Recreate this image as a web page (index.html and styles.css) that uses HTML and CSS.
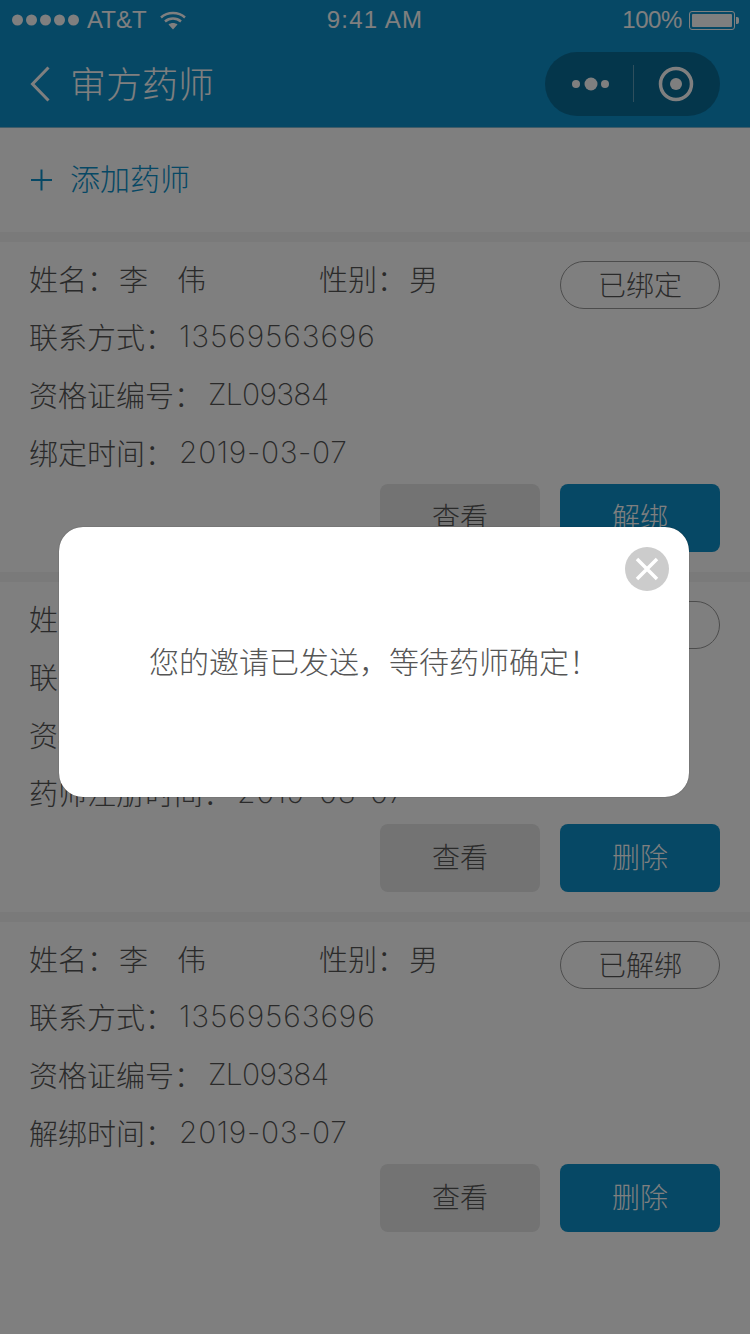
FILE: index.html
```html
<!DOCTYPE html>
<html lang="zh-CN">
  <head>
    <meta charset="UTF-8">
    <meta name="viewport" content="width=device-width, initial-scale=1.0">
    <title>审方药师</title>
    <link rel="stylesheet" href="styles.css">
  </head>
  <body>
    <div class="page">
      <div class="topbar">
        <div class="statusbar">
          <div class="statusleft">
            <svg class="signal" width="68" height="12" viewBox="0 0 68 12">
              <circle cx="5.5" cy="6" r="5.5"/><circle cx="19.5" cy="6" r="5.5"/><circle cx="33.5" cy="6" r="5.5"/><circle cx="47.5" cy="6" r="5.5"/><circle cx="61.5" cy="6" r="5.5"/>
            </svg>
            <span class="carrier">AT&amp;T</span>
            <svg class="wifi" width="26" height="20" viewBox="0 0 26 20">
              <path d="M1 7.5C7.500 1.500 18.500 1.500 25 7.500" fill="none" stroke="#fff" stroke-width="2.400"/>
              <path d="M5 11.500C9.500 7.500 16.500 7.500 21 11.500" fill="none" stroke="#fff" stroke-width="2.400"/>
              <path d="M8.500 14.500C11 12.500 15 12.500 17.500 14.500L13 19.500Z" fill="#fff"/>
            </svg>
          </div>
          <div class="statustime">9:41 AM</div>
          <div class="statusright">
            <span class="percent">100%</span>
            <div class="battery"><div class="batteryfill"></div></div>
            <div class="batterytip"></div>
          </div>
        </div>
        <div class="navbar">
          <svg class="back" width="20" height="36" viewBox="0 0 20 36">
            <path d="M18.500 1.500L2.500 18L18.500 34.500" fill="none" stroke="#fff" stroke-width="3"/>
          </svg>
          <div class="navtitle">审方药师</div>
          <div class="capsule">
            <div class="capsulemore">
              <svg width="38" height="14" viewBox="0 0 38 14">
                <circle cx="4" cy="7" r="4" fill="#fff"/><circle cx="19" cy="7" r="6.500" fill="#fff"/><circle cx="33" cy="7" r="4" fill="#fff"/>
              </svg>
            </div>
            <div class="capsuleline"></div>
            <div class="capsuleclose">
              <svg width="36" height="36" viewBox="0 0 36 36">
                <circle cx="18" cy="18" r="15.500" fill="none" stroke="#fff" stroke-width="3.500"/>
                <circle cx="18" cy="18" r="6" fill="#fff"/>
              </svg>
            </div>
          </div>
        </div>
      </div>

      <div class="addrow">
        <svg class="plus" width="22" height="22" viewBox="0 0 22 22">
          <path d="M0 11H21M10.500 0.500V21.500" fill="none" stroke="#0c90ca" stroke-width="2"/>
        </svg>
        <span class="addtext">添加药师</span>
      </div>

      <div class="card">
        <div class="row">
          <div class="namecell"><span class="label">姓名：</span><span class="value">李　伟</span></div>
          <div class="sexcell"><span class="label">性别：</span><span class="value">男</span></div>
          <div class="badge">已绑定</div>
        </div>
        <div class="row"><span class="label">联系方式：</span><span class="num phone">13569563696</span></div>
        <div class="row"><span class="label">资格证编号：</span><span class="num code">ZL09384</span></div>
        <div class="row"><span class="label">绑定时间：</span><span class="num date">2019-03-07</span></div>
        <div class="actions">
          <div class="btn grey">查看</div>
          <div class="btn blue">解绑</div>
        </div>
      </div>

      <div class="card">
        <div class="row">
          <div class="namecell"><span class="label">姓名：</span><span class="value">李　伟</span></div>
          <div class="sexcell"><span class="label">性别：</span><span class="value">男</span></div>
          <div class="badge">待确认</div>
        </div>
        <div class="row"><span class="label">联系方式：</span><span class="num phone">13569563696</span></div>
        <div class="row"><span class="label">资格证编号：</span><span class="num code">ZL09384</span></div>
        <div class="row"><span class="label">药师注册时间：</span><span class="num date">2019-03-07</span></div>
        <div class="actions">
          <div class="btn grey">查看</div>
          <div class="btn blue">删除</div>
        </div>
      </div>

      <div class="card">
        <div class="row">
          <div class="namecell"><span class="label">姓名：</span><span class="value">李　伟</span></div>
          <div class="sexcell"><span class="label">性别：</span><span class="value">男</span></div>
          <div class="badge">已解绑</div>
        </div>
        <div class="row"><span class="label">联系方式：</span><span class="num phone">13569563696</span></div>
        <div class="row"><span class="label">资格证编号：</span><span class="num code">ZL09384</span></div>
        <div class="row"><span class="label">解绑时间：</span><span class="num date">2019-03-07</span></div>
        <div class="actions">
          <div class="btn grey">查看</div>
          <div class="btn blue">删除</div>
        </div>
      </div>
    </div>

    <div class="mask">
      <div class="dialog">
        <div class="dialogclose">
          <svg width="24" height="24" viewBox="0 0 24 24">
            <path d="M2 2L22 22M22 2L2 22" fill="none" stroke="#fff" stroke-width="3.500"/>
          </svg>
        </div>
        <div class="dialogtext">您的邀请已发送，等待药师确定！</div>
      </div>
    </div>
  </body>
</html>
```

FILE: styles.css
```css
* {
  box-sizing: border-box;
}
html, body {
  margin: 0;
  height: 1334px;
  overflow: hidden;
}
body {
  position: relative;
  background-color: white;
  font-family: "Inter", "Noto Sans CJK SC", sans-serif;
  font-weight: 300;
  color: #555;
}
.page {
  display: flex;
  flex-direction: column;
}
.topbar {
  height: 128px;
  background-color: #0c90ca;
  color: white;
  border-bottom: 1px solid #7fb9d3;
}
.statusbar {
  display: flex;
  align-items: center;
  justify-content: space-between;
  height: 40px;
  padding: 0 12px;
  font-family: "Liberation Sans", sans-serif;
  font-size: 24px;
}
.statusleft, .statusright {
  display: flex;
  align-items: center;
  width: 240px;
}
.statusright {
  justify-content: flex-end;
}
.signal {
  fill: white;
}
.carrier {
  margin-left: 7px;
}
.wifi {
  margin-left: 13px;
}
.statustime {
  letter-spacing: 1.2px;
}
.percent {
  margin-right: 7px;
  letter-spacing: -0.4px;
}
.battery {
  width: 46px;
  height: 19px;
  padding: 2px;
  border: 1px solid white;
  border-radius: 3px;
}
.batteryfill {
  height: 100%;
  background-color: white;
  border-radius: 1px;
}
.batterytip {
  width: 3px;
  height: 7px;
  margin-left: 1px;
  margin-right: -1px;
  background-color: white;
  border-radius: 0 2px 2px 0;
}
.navbar {
  display: flex;
  align-items: center;
  height: 87px;
  padding: 0 30px;
}
.back {
  flex: none;
}
.navtitle {
  margin-left: 20px;
  padding-bottom: 3px;
  font-family: "Noto Sans CJK SC", sans-serif;
  font-size: 36px;
  font-weight: 300;
}
.capsule {
  display: flex;
  align-items: center;
  width: 175px;
  height: 64px;
  margin-left: auto;
  border-radius: 32px;
  background-color: rgba(0, 0, 0, 0.25);
}
.capsulemore {
  display: flex;
  justify-content: center;
  width: 88px;
  padding-left: 4px;
}
.capsuleline {
  width: 1px;
  height: 37px;
  background-color: rgba(255, 255, 255, 0.35);
}
.capsuleclose {
  display: flex;
  justify-content: center;
  flex: 1;
  padding-right: 3px;
}
.addrow {
  display: flex;
  align-items: center;
  height: 104px;
  padding-left: 31px;
}
.addtext {
  margin-left: 17px;
  padding-bottom: 7px;
  font-family: "Noto Sans CJK SC", sans-serif;
  font-size: 30px;
  font-weight: 300;
  color: #0c90ca;
}
.card {
  padding: 7px 30px 20px 29px;
  border-top: 10px solid #f4f4f4;
}
.row {
  display: flex;
  align-items: center;
  height: 58px;
  font-size: 29px;
}
.label, .value {
  font-family: "Noto Sans CJK SC", sans-serif;
}
.value {
  margin-left: 3px;
}
.num {
  margin-left: 5px;
  font-size: 30px;
  font-weight: 200;
}
.phone {
  letter-spacing: 0.9px;
}
.code {
  letter-spacing: -0.7px;
}
.date {
  letter-spacing: 0.6px;
}
.namecell {
  width: 290px;
}
.badge {
  display: flex;
  align-items: center;
  justify-content: center;
  width: 160px;
  height: 48px;
  margin-left: auto;
  margin-top: 14px;
  padding-bottom: 3px;
  border: 1px solid #999;
  border-radius: 24px;
  font-family: "Noto Sans CJK SC", sans-serif;
  font-size: 28px;
}
.actions {
  display: flex;
  justify-content: flex-end;
  gap: 20px;
  margin-top: 3px;
}
.btn {
  display: flex;
  align-items: center;
  justify-content: center;
  width: 160px;
  height: 68px;
  padding-bottom: 5px;
  border-radius: 8px;
  font-family: "Noto Sans CJK SC", sans-serif;
  font-size: 28px;
}
.grey {
  background-color: #e6e6e6;
}
.blue {
  background-color: #0c90ca;
  color: white;
}
.mask {
  position: absolute;
  top: 0;
  left: 0;
  right: 0;
  bottom: 0;
  padding: 527px 0 0 59px;
  background-color: rgba(0, 0, 0, 0.5);
}
.dialog {
  position: relative;
  display: flex;
  align-items: center;
  justify-content: center;
  width: 630px;
  height: 270px;
  padding-bottom: 5px;
  border-radius: 24px;
  background-color: white;
  box-shadow: 0 0 1px rgba(0, 0, 0, 0.6);
}
.dialogclose {
  position: absolute;
  top: 20px;
  right: 20px;
  display: flex;
  align-items: center;
  justify-content: center;
  width: 44px;
  height: 44px;
  border-radius: 50%;
  background-color: #ccc;
}
.dialogtext {
  font-family: "Noto Sans CJK SC", sans-serif;
  font-size: 30px;
  color: #555;
}
```
